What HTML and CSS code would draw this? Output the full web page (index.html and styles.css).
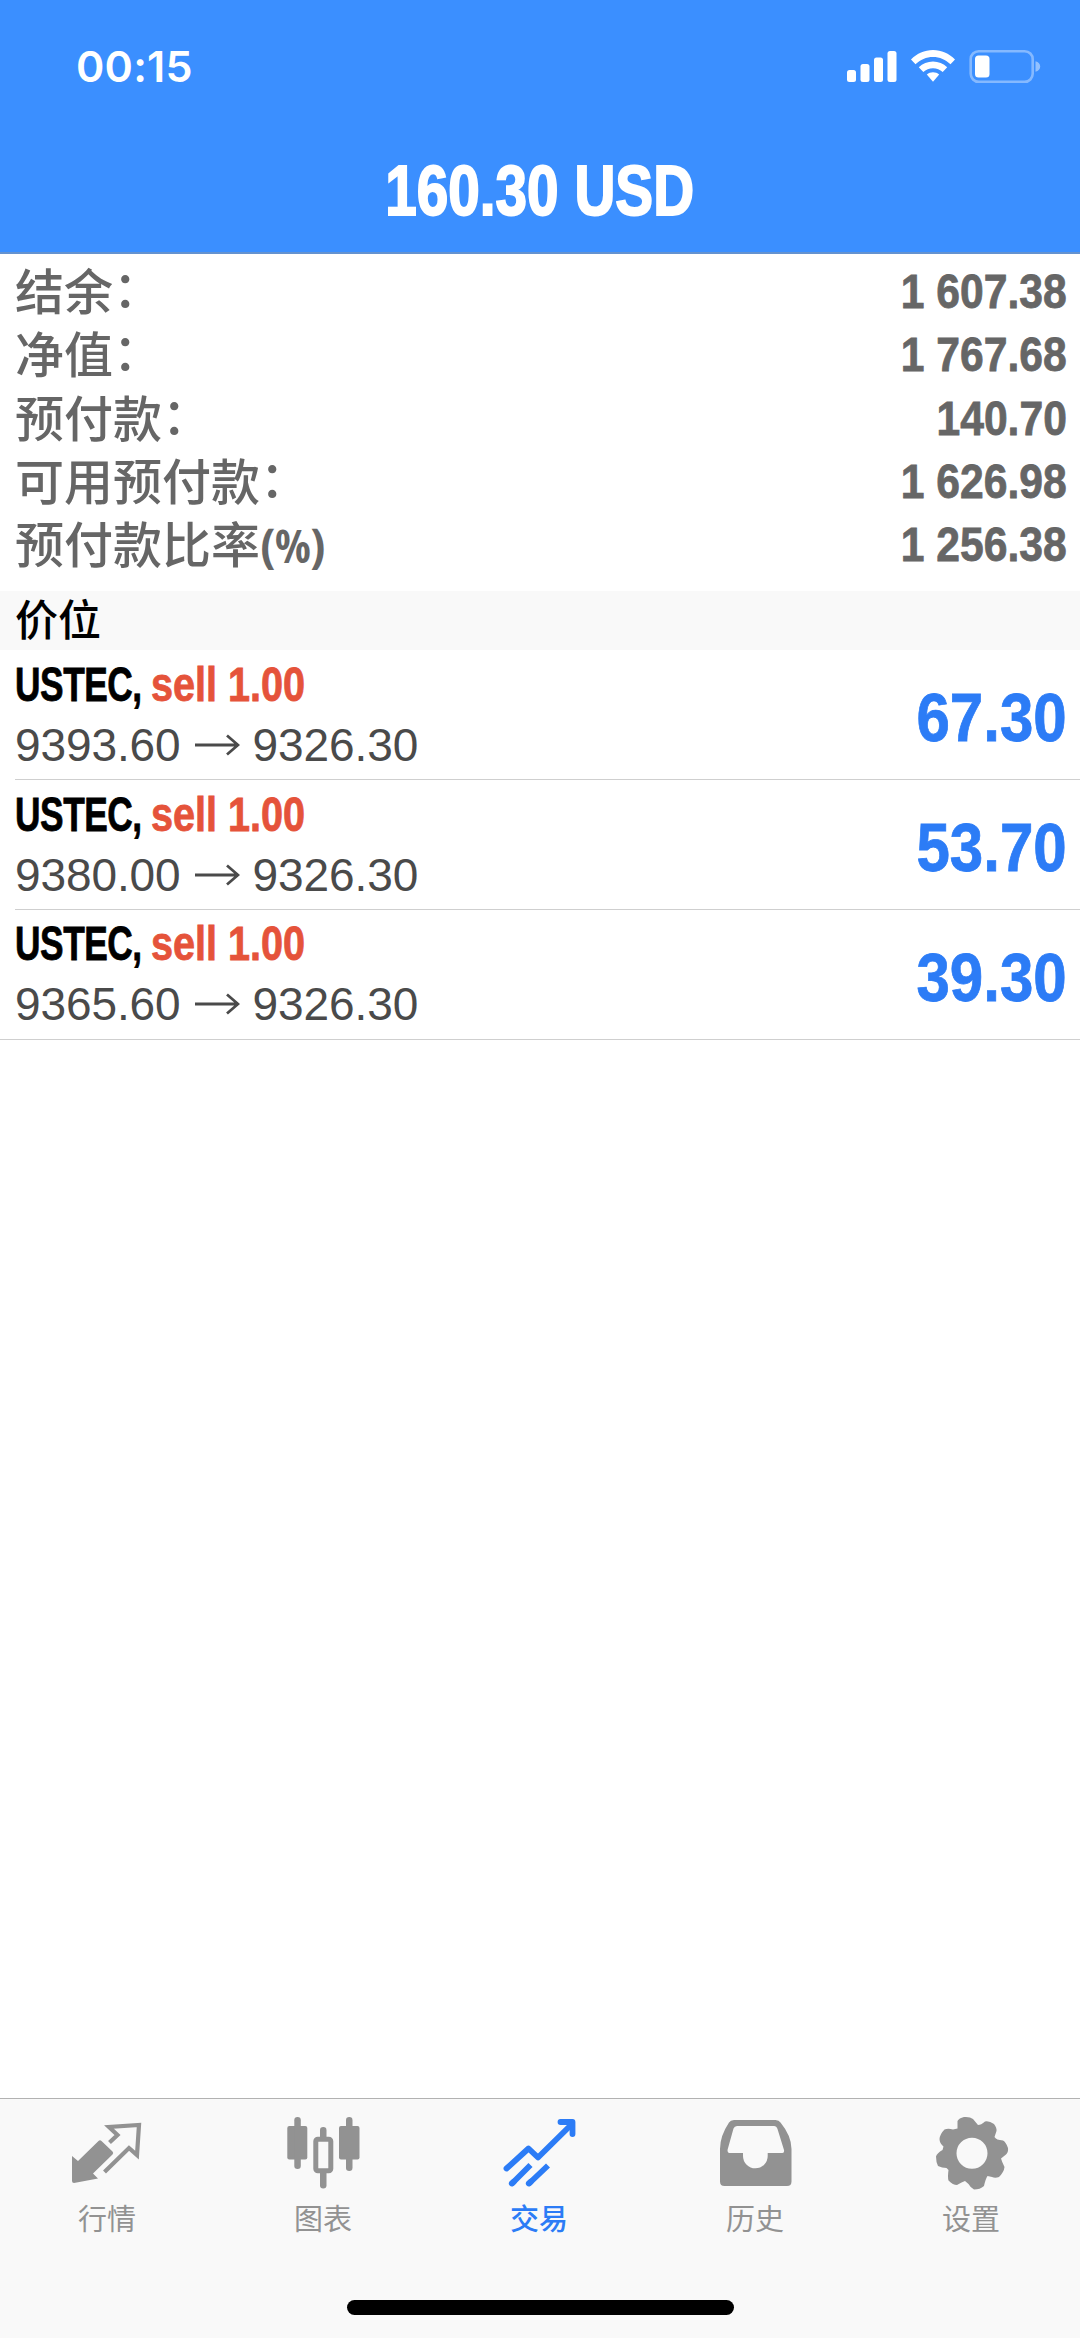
FILE: index.html
```html
<!DOCTYPE html>
<html lang="zh-CN">
<head>
<meta charset="utf-8">
<title>交易</title>
<link rel="stylesheet" href="styles.css">
</head>
<body>
<div class="app">
  <header class="header">
    <div class="status">
      <span class="time">00:15</span>
      <svg class="status-icons" width="196" height="36" viewBox="846 48 196 36">
        <g fill="#fff">
          <rect x="847" y="70" width="9" height="12" rx="2.5"/>
          <rect x="860.5" y="64" width="9" height="18" rx="2.5"/>
          <rect x="874" y="57.5" width="9" height="24.5" rx="2.5"/>
          <rect x="887.5" y="51" width="9" height="31" rx="2.5"/>
          <path d="M933 50C924.500 50 917 53.500 911 59.500L915.500 64.300C920.200 59.600 926.300 57 933 57S945.800 59.600 950.500 64.300L955 59.500C949 53.500 941.500 50 933 50Z"/>
          <path d="M933 61.500C927.600 61.500 922.600 63.600 918.800 67.200L923.300 72C925.900 69.600 929.300 68.200 933 68.200S940.100 69.600 942.700 72L947.200 67.200C943.400 63.600 938.400 61.500 933 61.500Z"/>
          <path d="M933 72.300C930.700 72.300 928.500 73.100 926.800 74.600L933 81.800L939.200 74.600C937.500 73.100 935.300 72.300 933 72.300Z"/>
          <rect x="975" y="55.5" width="14.5" height="22" rx="3.5"/>
        </g>
        <rect x="970.7" y="51.2" width="62" height="30.6" rx="8" fill="none" stroke="#fff" stroke-opacity=".38" stroke-width="2.6"/>
        <path d="M1035.500 61.200C1038.500 62 1040.200 64 1040.200 66.500S1038.500 71 1035.500 71.800Z" fill="#fff" fill-opacity=".45"/>
      </svg>
    </div>
    <h1 class="total"><span class="condensed">160.30 USD</span></h1>
  </header>

  <dl class="summary">
    <div class="summary-row"><dt>结余<span class="colon">：</span></dt><dd class="condensed">1 607.38</dd></div>
    <div class="summary-row"><dt>净值<span class="colon">：</span></dt><dd class="condensed">1 767.68</dd></div>
    <div class="summary-row"><dt>预付款<span class="colon">：</span></dt><dd class="condensed">140.70</dd></div>
    <div class="summary-row"><dt>可用预付款<span class="colon">：</span></dt><dd class="condensed">1 626.98</dd></div>
    <div class="summary-row"><dt>预付款比率<span class="unit">(%)</span></dt><dd class="condensed">1 256.38</dd></div>
  </dl>

  <h2 class="section">价位</h2>
  <ul class="positions">
    <li class="position">
      <div class="deal">
        <div class="order"><span class="symbol">USTEC,</span><span class="side">sell 1.00</span></div>
        <div class="prices">9393.60<svg class="arrow" viewBox="0 0 46 22"><path d="M1 11H44M33 1.500L44 11L33 20.500"/></svg>9326.30</div>
      </div>
      <div class="profit condensed">67.30</div>
    </li>
    <li class="position">
      <div class="deal">
        <div class="order"><span class="symbol">USTEC,</span><span class="side">sell 1.00</span></div>
        <div class="prices">9380.00<svg class="arrow" viewBox="0 0 46 22"><path d="M1 11H44M33 1.500L44 11L33 20.500"/></svg>9326.30</div>
      </div>
      <div class="profit condensed">53.70</div>
    </li>
    <li class="position">
      <div class="deal">
        <div class="order"><span class="symbol">USTEC,</span><span class="side">sell 1.00</span></div>
        <div class="prices">9365.60<svg class="arrow" viewBox="0 0 46 22"><path d="M1 11H44M33 1.500L44 11L33 20.500"/></svg>9326.30</div>
      </div>
      <div class="profit condensed">39.30</div>
    </li>
  </ul>

  <nav class="tabbar">
    <a class="tab">
      <svg class="icon" viewBox="66 2112 84 80">
        <path fill="#929292" d="M72 2156L78 2161L98.500 2141Q100 2139.500 101.500 2141L112.500 2151.500Q114 2153 112.500 2154.500L93 2173.500L98 2178.500L74 2183Q72 2183 72 2181Z"/>
        <path fill="none" stroke="#929292" stroke-width="4.2" d="M109.500 2142.500L117.500 2135L109 2127L139 2125L137 2155L129 2148L104.500 2172"/>
      </svg>
      <span>行情</span>
    </a>
    <a class="tab">
      <svg class="icon" viewBox="282 2112 84 80">
        <g fill="#929292">
          <rect x="287.3" y="2126" width="20" height="33.5" rx="2"/><rect x="294.3" y="2117" width="6.5" height="52" rx="3.2"/>
          <rect x="339" y="2126" width="20.5" height="33.5" rx="2"/><rect x="346" y="2117" width="6.5" height="54" rx="3.2"/>
          <rect x="320" y="2127" width="6.5" height="14" rx="3.2"/><rect x="320" y="2170" width="6.5" height="18.5" rx="3.2"/>
        </g>
        <rect x="315.8" y="2139.3" width="15" height="31.5" rx="2" fill="none" stroke="#929292" stroke-width="5"/>
      </svg>
      <span>图表</span>
    </a>
    <a class="tab active">
      <svg class="icon" viewBox="498 2112 84 80">
        <g fill="none" stroke="#2c7cf6" stroke-width="5.8" stroke-linecap="round" stroke-linejoin="round">
          <path d="M506.500 2168.500L528.500 2148.500L538 2157.500L572 2124"/>
          <path d="M560.500 2122H572.500V2134"/>
          <path stroke-linecap="butt" d="M530.500 2165L511.500 2184M548 2165.500L528.500 2184"/>
          <path d="M511.800 2183.500L514 2181.500M528.800 2183.500L531 2181.500"/>
        </g>
      </svg>
      <span>交易</span>
    </a>
    <a class="tab">
      <svg class="icon" viewBox="714 2112 84 80">
        <path fill="#929292" fill-rule="evenodd" d="M734 2120H775.500Q779 2120 780.500 2122.500Q791.500 2136 791.500 2149V2181.500Q791.500 2186 787 2186H724.500Q720 2186 720 2181.500V2149Q720 2136 729 2122.500Q730.500 2120 734 2120ZM737 2126Q734.500 2126 733.500 2128.500L727.500 2150Q727.500 2153 729.500 2153H743V2156A12.300 12.300 0 0 0 767.700 2156V2153H782.500Q784.500 2153 784 2150L777.500 2129Q776.500 2126 774 2126Z"/>
      </svg>
      <span>历史</span>
    </a>
    <a class="tab">
      <svg class="icon" viewBox="930 2112 84 80">
        <path fill="#929292" fill-rule="evenodd" d="M957.500 2121Q959 2118 964 2117Q970 2116.500 973 2119L978 2125Q981 2125 985 2121.500Q989 2120.500 994 2124Q997 2128 996.500 2131L994.500 2137Q996 2140 1003 2140.500Q1006 2142 1008 2148Q1008.500 2152 1006 2154.500L1001 2158.500Q1002 2162 1004.500 2167Q1004 2172 999 2177Q995 2178.500 992 2177L987.500 2176Q985.500 2179 984 2186Q980 2189.500 974 2189.500Q970 2187 968.500 2184L965 2181Q962 2182 957 2185Q953 2185 948.500 2180.500Q947.500 2177 948.500 2170L946.500 2168Q942 2168 938 2166Q936 2162 936 2156.500Q937 2153 942.500 2150L943.500 2146.500Q939.500 2143 939.500 2139Q940 2134 944.500 2129.500Q948 2128 953 2129.500L957.500 2128.500ZM972 2137.700A15.500 15.500 0 1 0 972 2168.700A15.500 15.500 0 1 0 972 2137.700Z"/>
      </svg>
      <span>设置</span>
    </a>
    <div class="home-indicator"></div>
  </nav>
</div>
</body>
</html>
```
FILE: styles.css
```css
* { box-sizing: border-box; margin: 0; padding: 0; }

body {
  background: #fff;
  font-family: "Liberation Sans", "Noto Sans CJK SC", sans-serif;
}

.app {
  display: flex;
  flex-direction: column;
  width: 1080px;
  height: 2338px;
  overflow: hidden;
}

.header {
  height: 254px;
  background: #3b8fff;
  border-bottom: 2px solid #6492cf;
  color: #fff;
}

.status {
  display: flex;
  justify-content: space-between;
  align-items: center;
  height: 132px;
  padding: 0 38px 0 76px;
}

.time {
  font: 560 43px/1 Inter, sans-serif;
  letter-spacing: .2px;
}

.status-icons { flex: none; }

.condensed {
  display: inline-block;
  font-weight: 700;
  white-space: nowrap;
  -webkit-text-stroke: .8px currentColor;
  transform: scaleX(.87);
}

.total {
  height: 118px;
  font-size: 70px;
  line-height: 118px;
  text-align: center;
}

.total .condensed {
  -webkit-text-stroke-width: 2px;
  transform: scaleX(.81);
}

.summary {
  height: 337px;
  padding: 6px 14px 0 15px;
  color: #666;
}

.summary-row {
  display: flex;
  justify-content: space-between;
  height: 63.33px;
  font-size: 49px;
  line-height: 63.33px;
}

.summary-row dt {
  margin-top: -3px;
  font-family: "Noto Sans CJK SC", sans-serif;
  font-weight: 500;
}

.colon {
  line-height: 0;
  vertical-align: 3px;
}

.unit {
  font-family: "Open Sans", sans-serif;
  font-size: 47px;
  font-weight: 680;
  font-stretch: 80%;
  line-height: 0;
}

.summary-row dd {
  margin-right: -1px;
  transform-origin: right;
}

.section {
  height: 59px;
  padding-left: 15px;
  background: #f9f9f9;
  font: 500 43px/52px "Noto Sans CJK SC", sans-serif;
}

.positions { list-style: none; }

.position {
  display: flex;
  justify-content: space-between;
  align-items: center;
  height: 129.67px;
  margin-left: 15px;
  padding-right: 13px;
  border-bottom: 1.5px solid #cfcfcf;
}

.position:first-child { height: 130.2px; }

.position:last-child {
  margin-left: 0;
  padding-left: 15px;
}

.order {
  display: flex;
  font-size: 48px;
  font-weight: 700;
  line-height: 60px;
  white-space: nowrap;
  -webkit-text-stroke: .8px currentColor;
}

.symbol {
  letter-spacing: -.6px;
  transform: scaleX(.735);
  transform-origin: left;
}

.side {
  margin-left: -36px;
  color: #e5533a;
  transform: scaleX(.825);
  transform-origin: left;
}

.prices {
  display: flex;
  align-items: center;
  color: #4a4a4a;
  font-size: 46px;
  line-height: 60px;
  letter-spacing: -.1px;
}

.arrow {
  width: 46px;
  height: 22px;
  margin: 0 13px;
  fill: none;
  stroke: #4a4a4a;
  stroke-width: 2.8;
}

.profit {
  padding-top: 6px;
  color: #2c7cf6;
  font-size: 69px;
  transform-origin: right;
}

.tabbar {
  display: grid;
  grid-template-columns: repeat(5, 1fr);
  grid-template-rows: 201px 1fr;
  height: 240px;
  margin-top: auto;
  background: #f9f9f9;
  border-top: 1px solid #b2b2b2;
}

.tab {
  display: flex;
  flex-direction: column;
  align-items: center;
  padding-top: 13px;
  color: #929292;
  font: 400 29px/50px "Noto Sans CJK SC", sans-serif;
}

.tab span { margin-right: 2px; }

.icon { width: 84px; height: 80px; }

.active { color: #2c7cf6; font-weight: 500; }

.home-indicator {
  grid-column: 1 / -1;
  justify-self: center;
  width: 387px;
  height: 15px;
  border-radius: 8px;
  background: #000;
}
```
